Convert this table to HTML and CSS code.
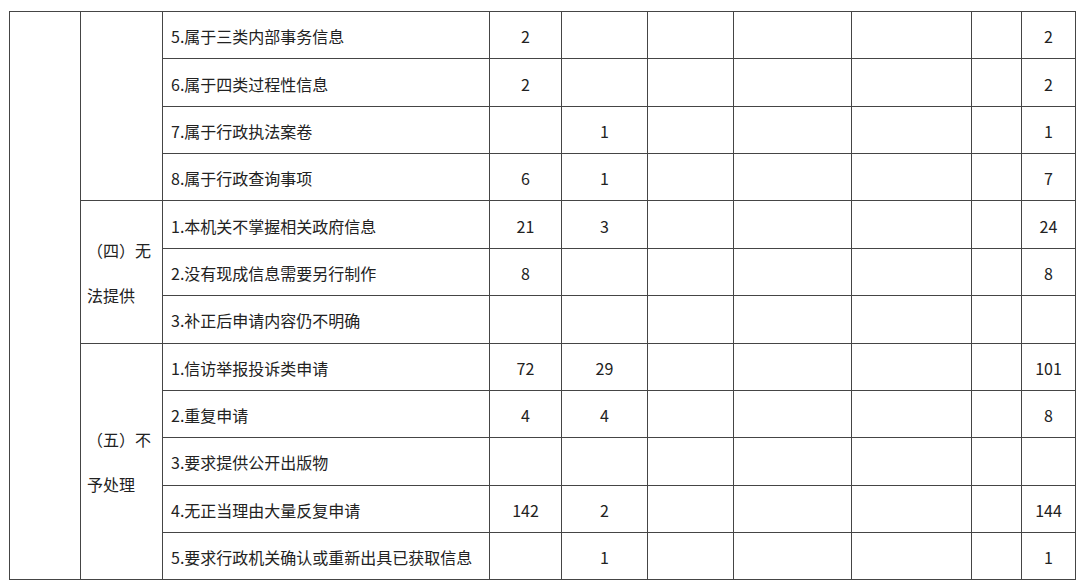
FILE: index.html
```html
<!DOCTYPE html>
<html lang="zh-CN">
<head>
<meta charset="utf-8">
<title>政府信息公开申请处理情况</title>
<link rel="stylesheet" href="styles.css">
</head>
<body>
<table class="report">
  <colgroup>
    <col class="c1"><col class="c2"><col class="c3"><col class="c4"><col class="c5">
    <col class="c6"><col class="c7"><col class="c8"><col class="c9"><col class="c10">
  </colgroup>
  <tbody>
    <tr>
      <td rowspan="12"></td>
      <td rowspan="4" class="group"></td>
      <td class="item">5.属于三类内部事务信息</td>
      <td class="num">2</td><td class="num"></td><td class="num"></td><td class="num"></td><td class="num"></td><td class="num"></td><td class="num">2</td>
    </tr>
    <tr>
      <td class="item">6.属于四类过程性信息</td>
      <td class="num">2</td><td class="num"></td><td class="num"></td><td class="num"></td><td class="num"></td><td class="num"></td><td class="num">2</td>
    </tr>
    <tr>
      <td class="item">7.属于行政执法案卷</td>
      <td class="num"></td><td class="num">1</td><td class="num"></td><td class="num"></td><td class="num"></td><td class="num"></td><td class="num">1</td>
    </tr>
    <tr>
      <td class="item">8.属于行政查询事项</td>
      <td class="num">6</td><td class="num">1</td><td class="num"></td><td class="num"></td><td class="num"></td><td class="num"></td><td class="num">7</td>
    </tr>
    <tr>
      <td rowspan="3" class="group">（四）无法提供</td>
      <td class="item">1.本机关不掌握相关政府信息</td>
      <td class="num">21</td><td class="num">3</td><td class="num"></td><td class="num"></td><td class="num"></td><td class="num"></td><td class="num">24</td>
    </tr>
    <tr>
      <td class="item">2.没有现成信息需要另行制作</td>
      <td class="num">8</td><td class="num"></td><td class="num"></td><td class="num"></td><td class="num"></td><td class="num"></td><td class="num">8</td>
    </tr>
    <tr>
      <td class="item">3.补正后申请内容仍不明确</td>
      <td class="num"></td><td class="num"></td><td class="num"></td><td class="num"></td><td class="num"></td><td class="num"></td><td class="num"></td>
    </tr>
    <tr>
      <td rowspan="5" class="group">（五）不予处理</td>
      <td class="item">1.信访举报投诉类申请</td>
      <td class="num">72</td><td class="num">29</td><td class="num"></td><td class="num"></td><td class="num"></td><td class="num"></td><td class="num">101</td>
    </tr>
    <tr>
      <td class="item">2.重复申请</td>
      <td class="num">4</td><td class="num">4</td><td class="num"></td><td class="num"></td><td class="num"></td><td class="num"></td><td class="num">8</td>
    </tr>
    <tr>
      <td class="item">3.要求提供公开出版物</td>
      <td class="num"></td><td class="num"></td><td class="num"></td><td class="num"></td><td class="num"></td><td class="num"></td><td class="num"></td>
    </tr>
    <tr>
      <td class="item">4.无正当理由大量反复申请</td>
      <td class="num">142</td><td class="num">2</td><td class="num"></td><td class="num"></td><td class="num"></td><td class="num"></td><td class="num">144</td>
    </tr>
    <tr>
      <td class="item">5.要求行政机关确认或重新出具已获取信息</td>
      <td class="num"></td><td class="num">1</td><td class="num"></td><td class="num"></td><td class="num"></td><td class="num"></td><td class="num">1</td>
    </tr>
  </tbody>
</table>
</body>
</html>
```

FILE: styles.css
```css
html, body {
  margin: 0;
  padding: 0;
  background: #ffffff;
}

body {
  padding: 11px 0 0 9px;
  font-family: "Microsoft YaHei", "Noto Sans CJK SC", "Noto Sans", sans-serif;
  color: #222222;
  font-size: 16px;
}

.report {
  border-collapse: collapse;
  table-layout: fixed;
  width: 1067px;
}

.report tr {
  height: 47.36px;
}

.report td {
  border: 1px solid #454545;
  padding: 0 8px;
  line-height: 20px;
  vertical-align: middle;
  overflow: hidden;
}

.c1 { width: 71px; }
.c2 { width: 82px; }
.c3 { width: 327px; }
.c4 { width: 72px; }
.c5 { width: 86px; }
.c6 { width: 86px; }
.c7 { width: 118px; }
.c8 { width: 120px; }
.c9 { width: 50px; }
.c10 { width: 54px; }

.report td.group {
  line-height: 45px;
  padding: 2px 6px 0 6px;
}

.report td.item {
  text-align: left;
  white-space: nowrap;
  padding-top: 2px;
}

.report td.num {
  text-align: center;
  padding: 2px 0 0 0;
}
```
